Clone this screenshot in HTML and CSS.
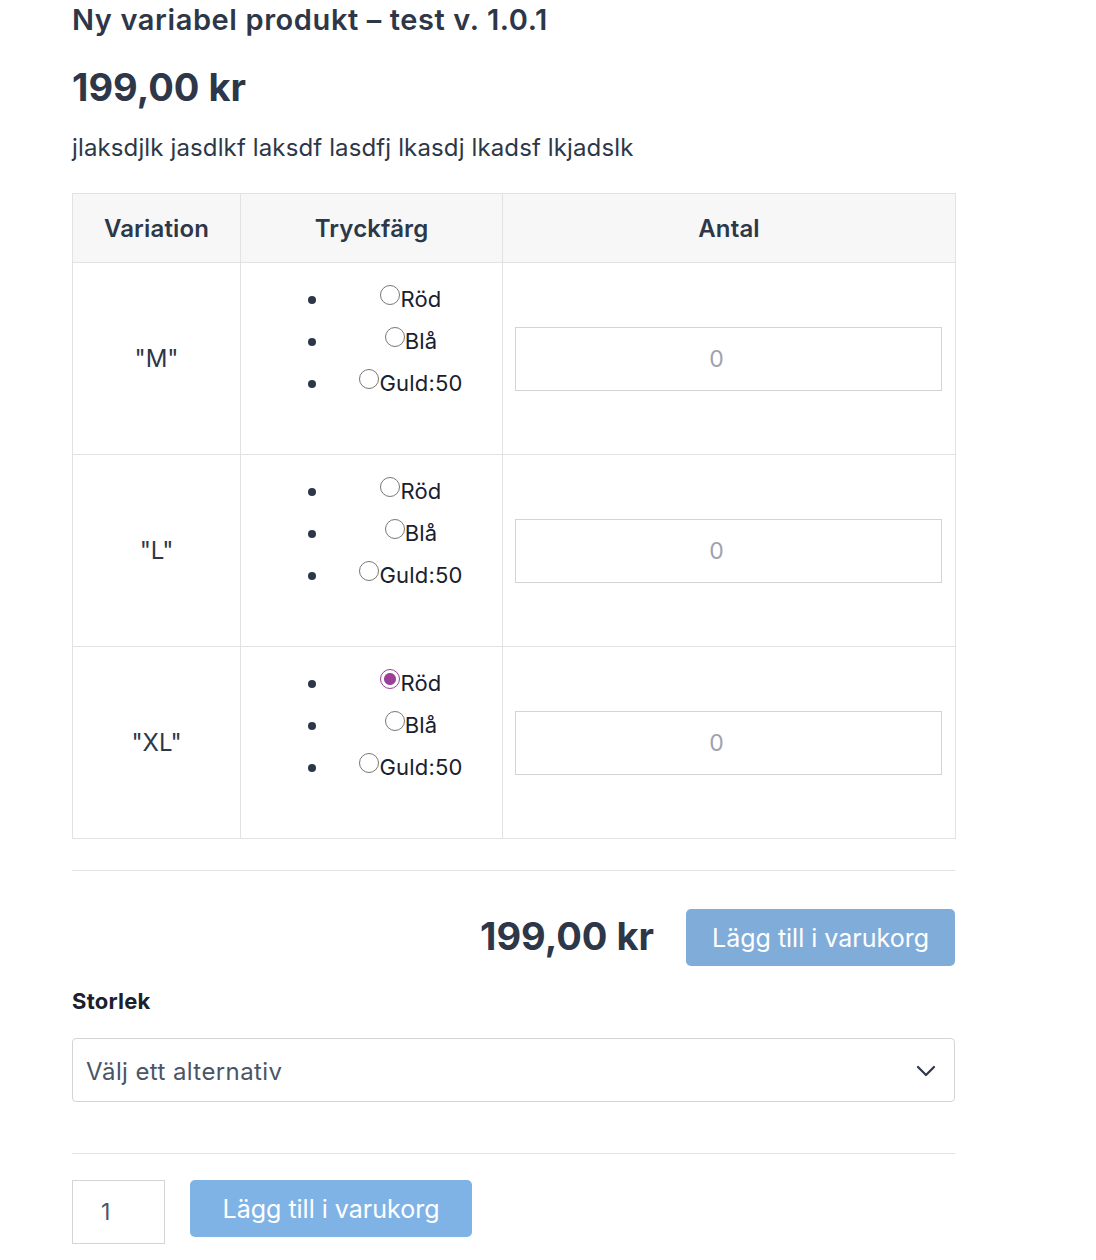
FILE: index.html
```html
<!DOCTYPE html>
<html lang="sv">
<head>
<meta charset="utf-8">
<title>Ny variabel produkt – test v. 1.0.1</title>
<link rel="stylesheet" href="styles.css">
</head>
<body>
<main class="product">
  <h1 class="title">Ny variabel produkt – test v. 1.0.1</h1>
  <p class="price">199,00 kr</p>
  <p class="desc">jlaksdjlk jasdlkf laksdf lasdfj lkasdj lkadsf lkjadslk</p>

  <table class="vtable">
    <colgroup>
      <col class="c1"><col class="c2"><col class="c3">
    </colgroup>
    <thead>
      <tr><th>Variation</th><th>Tryckfärg</th><th>Antal</th></tr>
    </thead>
    <tbody>
      <tr>
        <td class="var">"M"</td>
        <td class="opts">
          <ul>
            <li><label><input type="radio" name="m">Röd</label></li>
            <li><label><input type="radio" name="m">Blå</label></li>
            <li><label><input type="radio" name="m">Guld:50</label></li>
          </ul>
        </td>
        <td class="qty"><input type="text" placeholder="0"></td>
      </tr>
      <tr>
        <td class="var">"L"</td>
        <td class="opts">
          <ul>
            <li><label><input type="radio" name="l">Röd</label></li>
            <li><label><input type="radio" name="l">Blå</label></li>
            <li><label><input type="radio" name="l">Guld:50</label></li>
          </ul>
        </td>
        <td class="qty"><input type="text" placeholder="0"></td>
      </tr>
      <tr>
        <td class="var">"XL"</td>
        <td class="opts">
          <ul>
            <li><label><input type="radio" name="xl" checked>Röd</label></li>
            <li><label><input type="radio" name="xl">Blå</label></li>
            <li><label><input type="radio" name="xl">Guld:50</label></li>
          </ul>
        </td>
        <td class="qty"><input type="text" placeholder="0"></td>
      </tr>
    </tbody>
  </table>

  <hr class="rule rule-1">

  <div class="total-row">
    <span class="total">199,00 kr</span>
    <button class="btn btn-a" type="button">Lägg till i varukorg</button>
  </div>

  <label class="field-label" for="storlek">Storlek</label>
  <div class="select" id="storlek">
    <span class="select-text">Välj ett alternativ</span>
    <svg class="chev" width="20" height="12" viewBox="0 0 20 12" aria-hidden="true"><path d="M2 2l8 8 8-8" fill="none" stroke="#2d3748" stroke-width="2.2" stroke-linecap="round" stroke-linejoin="round"/></svg>
  </div>

  <hr class="rule rule-2">

  <div class="cart-row">
    <input class="qty-box" type="text" value="1">
    <button class="btn btn-b" type="button">Lägg till i varukorg</button>
  </div>
</main>
</body>
</html>
```
FILE: styles.css
```css
* { box-sizing: border-box; }
html, body { margin: 0; padding: 0; background: #fff; }
body {
  font-family: Inter, "Noto Sans", Arial, sans-serif;
  color: #2d3748;
}
.product {
  width: 883px;
  margin-left: 72px;
}
.title {
  margin: 0;
  font-size: 29px;
  font-weight: 600;
  line-height: 40px;
  letter-spacing: 0.6px;
}
.price {
  margin: 0;
  padding-top: 21px;
  font-size: 38px;
  font-weight: 700;
  line-height: 52px;
}
.desc {
  margin: 0;
  padding-top: 20px;
  font-size: 24px;
  line-height: 30px;
  letter-spacing: 0.13px;
}
.vtable {
  margin-top: 30px;
  width: 883px;
  border-collapse: collapse;
  table-layout: fixed;
}
.c1 { width: 168px; }
.c2 { width: 262px; }
.c3 { width: 453px; }
.vtable th, .vtable td {
  border: 1px solid #e2e2e2;
  text-align: center;
  vertical-align: middle;
}
.vtable th {
  background: #f7f7f7;
  font-size: 24px;
  font-weight: 600;
  height: 69px;
  letter-spacing: 0.15px;
}
.var { font-size: 24px; }
.opts { padding: 14px 6px 14px 0; }
.opts ul {
  margin: 0 0 37px;
  padding-left: 67px;
  list-style: none;
}
.opts li {
  display: flex;
  align-items: center;
  height: 42px;
  font-size: 22px;
  letter-spacing: 0.2px;
  color: #1a202c;
}
.opts li::before {
  content: "";
  flex: none;
  width: 8px;
  height: 8px;
  margin-top: 3px;
  border-radius: 50%;
  background: #2d3748;
}
.opts label {
  flex: 1;
  text-align: center;
  margin-left: 10px;
}
.opts input[type="radio"] {
  appearance: none;
  -webkit-appearance: none;
  width: 20px;
  height: 20px;
  margin: 0;
  border: 1.3px solid #777;
  border-radius: 50%;
  vertical-align: 2px;
  background: #fff;
}
.opts input[type="radio"]:checked {
  border-color: #9b3f98;
  background: radial-gradient(circle, #9b3f98 0 5.5px, #fff 6.5px);
}
.qty { padding: 0 13px 0 12px; }
.qty input {
  width: 100%;
  height: 64px;
  border: 1px solid #d4d4d8;
  font-family: inherit;
  font-size: 23px;
  text-align: center;
  color: #2d3748;
  padding: 0 24px 0 0;
  outline: none;
}
.qty input::placeholder { color: #9ca3af; }
.rule {
  border: 0;
  border-top: 1px solid #e2e2e2;
  margin: 0;
}
.rule-1 { margin-top: 31px; }
.total-row {
  display: flex;
  justify-content: flex-end;
  align-items: center;
  gap: 32px;
  margin-top: 38px;
}
.total {
  font-size: 38px;
  font-weight: 700;
  margin-bottom: 4px;
}
.btn {
  border: 0;
  border-radius: 5px;
  color: #fff;
  font-family: inherit;
  font-size: 25px;
  height: 57px;
  padding: 0;
  cursor: pointer;
}
.btn-a { background: #80acd9; width: 269px; }
.btn-b { background: #7fb3e6; width: 282px; }
.field-label {
  display: block;
  margin-top: 22px;
  font-size: 22px;
  font-weight: 700;
  letter-spacing: 0.25px;
  color: #1a202c;
  line-height: 26px;
}
.select {
  margin-top: 24px;
  height: 64px;
  border: 1px solid #d4d4d8;
  border-radius: 4px;
  display: flex;
  align-items: center;
  justify-content: space-between;
  padding: 2px 18px 0 13px;
}
.select-text {
  font-size: 24px;
  letter-spacing: 0.4px;
  color: #4a5568;
}
.rule-2 { margin-top: 51px; }
.cart-row {
  display: flex;
  align-items: flex-start;
  gap: 25px;
  margin-top: 26px;
}
.qty-box {
  width: 93px;
  height: 64px;
  border: 1px solid #d4d4d8;
  font-family: inherit;
  font-size: 23px;
  color: #4a5568;
  padding: 0 0 0 28px;
  outline: none;
}
```
